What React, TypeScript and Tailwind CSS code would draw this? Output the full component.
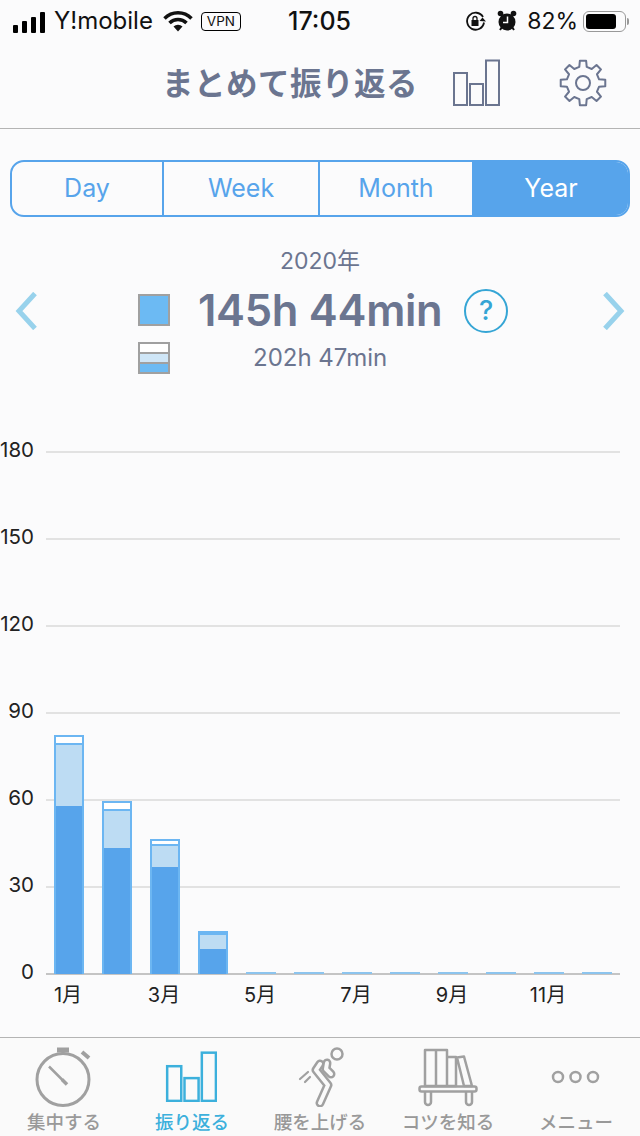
import React from "react";

const font = { fontFamily: 'Inter, "Noto Sans CJK JP", sans-serif' };
const slate = "#6b7590";
const bg = "#fbfbfc";

function Bars({ color, w = 2, width = 48, height = 47 }: { color: string; w?: number; width?: number; height?: number }) {
  return (
    <svg width={width} height={height} viewBox="0 0 48 47" fill="none" stroke={color} strokeWidth={w}>
      <rect x="2" y="14" width="13" height="32" />
      <rect x="18" y="25" width="13" height="21" />
      <rect x="34" y="1.500" width="13" height="44.500" />
    </svg>
  );
}

function gearPath() {
  const cx = 24;
  const cy = 24;
  const R = 22.5;
  const r = 16.5;
  const pts: string[] = [];
  for (let i = 0; i < 8; i++) {
    const a = (i * 45 * Math.PI) / 180 - Math.PI / 2;
    const d1 = (13 * Math.PI) / 180;
    const d2 = (8 * Math.PI) / 180;
    const p = (rad: number, ang: number) => `${(cx + rad * Math.cos(ang)).toFixed(2)} ${(cy + rad * Math.sin(ang)).toFixed(2)}`;
    pts.push(p(r, a - d1), p(R, a - d2), p(R, a + d2), p(r, a + d1));
  }
  return "M" + pts.join("L") + "Z";
}

function Gear() {
  return (
    <svg width="48" height="48" viewBox="0 0 48 48" fill="none" stroke={slate} strokeWidth="2" strokeLinejoin="round">
      <path d={gearPath()} />
      <circle cx="24" cy="24" r="7" />
    </svg>
  );
}

function Stopwatch() {
  return (
    <svg width="60" height="64" viewBox="0 0 60 64" fill="none" stroke="#a0a0a0" strokeWidth="3">
      <circle cx="29" cy="36.500" r="26" />
      <path d="M23 7h12" strokeWidth="5" />
      <path d="M29 8v3" />
      <path d="M48 9l7 6" strokeWidth="4" />
      <path d="M15 23.500l14 14" strokeWidth="2.500" />
      <path d="M28 36.500l5 5" strokeWidth="3.500" />
    </svg>
  );
}

function Runner() {
  const limbs = "M38 23 L34 29 L46 44 L38 62";
  const arm = "M45 22 L44 28 L49 33";
  return (
    <svg className="mt-[3px]" width="48" height="62" viewBox="14 4 48 62" fill="none" strokeLinejoin="round" strokeLinecap="round">
      <circle cx="55" cy="13" r="5.500" stroke="#a0a0a0" strokeWidth="2.500" />
      <path d={limbs} stroke="#a0a0a0" strokeWidth="9" />
      <path d={arm} stroke="#a0a0a0" strokeWidth="9" />
      <path d={limbs} stroke="#fafafa" strokeWidth="4" />
      <path d={arm} stroke="#fafafa" strokeWidth="4" />
      <path d="M18 38l8-7M23 41l5-5" stroke="#a0a0a0" strokeWidth="2.200" />
    </svg>
  );
}

function Books() {
  return (
    <svg width="60" height="64" viewBox="0 0 60 64" fill="none" stroke="#a0a0a0" strokeWidth="2.500" strokeLinejoin="round">
      <path d="M7 7h11v36H7zM18 7h11v36H18zM29 14h9v29h-9zM39 14.500l7-1 8 29.500h-8z" />
      <rect x="1.500" y="43.500" width="57" height="5" rx="2" />
      <path d="M7 49v10a3 3 0 0 0 6 0V49M48 49v10a3 3 0 0 0 6 0V49" />
    </svg>
  );
}

function Dots() {
  return (
    <svg className="mt-[4px]" width="50" height="16" viewBox="0 0 50 16" fill="none" stroke="#a0a0a0" strokeWidth="2.500">
      <circle cx="7" cy="8" r="5" />
      <circle cx="24.500" cy="8" r="5" />
      <circle cx="42" cy="8" r="5" />
    </svg>
  );
}

function StatusBar() {
  return (
    <div className="h-[44px] flex items-center pb-[2px] text-[#111]">
      <div className="flex-1 basis-0 flex items-center pl-[13px]">
        <div className="flex items-end gap-[4px] mt-[2px]">
          {[8, 12, 16, 21].map((h) => (
            <div key={h} className="w-[5px] bg-black rounded-[1px]" style={{ height: h }} />
          ))}
        </div>
        <span className="ml-[9px] text-[24px] leading-none">Y!mobile</span>
        <svg className="ml-[10px]" width="30" height="22" viewBox="0 0 30 22" fill="none" stroke="#111" strokeWidth="3.500">
          <path d="M1.500 8.500A19 19 0 0 1 28.500 8.500" />
          <path d="M6.500 13A12 12 0 0 1 23.500 13" />
          <path d="M15 21.500L10.500 16.500A6.500 6.500 0 0 1 19.500 16.500Z" fill="#111" stroke="none" />
        </svg>
        <span className="ml-[8px] h-[19px] w-[40px] border-[1.5px] border-black rounded-[4px] text-[13.5px] leading-[16px] text-center">VPN</span>
      </div>
      <span className="mr-[3px] text-[25px] font-medium leading-none">17:05</span>
      <div className="flex-1 basis-0 flex items-center justify-end pr-[11px]">
        <svg width="21" height="22" viewBox="0 0 21 22" fill="none" stroke="#111" strokeWidth="1.800">
          <path d="M18 7a8.500 8.500 0 1 0 1 5.500" />
          <path d="M21 11.500l-3.500-4-3 3.500z" fill="#111" stroke="none" />
          <rect x="6.500" y="10" width="7" height="6" fill="#111" stroke="none" />
          <path d="M8 10V8.500a2 2 0 0 1 4 0V10" strokeWidth="1.300" />
        </svg>
        <svg className="ml-[11px]" width="20" height="22" viewBox="0 0 20 22" fill="#111">
          <circle cx="10" cy="12" r="8.500" />
          <circle cx="3.500" cy="3.500" r="2.800" />
          <circle cx="16.500" cy="3.500" r="2.800" />
          <path d="M3 20l2-3M17 20l-2-3" stroke="#111" strokeWidth="2" />
          <path d="M10.500 6.500v6H6" stroke="#fff" strokeWidth="1.500" fill="none" />
        </svg>
        <span className="ml-[10px] text-[23px] leading-none">82%</span>
        <div className="ml-[5px] w-[43px] h-[21px] border-[1.5px] border-[#999] rounded-[6px] p-[2px]">
          <div className="w-[30px] h-full bg-black rounded-[3px]" />
        </div>
        <div className="w-[2px] h-[7px] bg-[#999] rounded-r-[2px] ml-[1px]" />
      </div>
    </div>
  );
}

function Header() {
  return (
    <div className="h-[85px] border-b border-[#b4b4b4] flex items-center">
      <h1 className="ml-[162px] w-[253px] mb-[4px] text-[31.5px] leading-none font-semibold tracking-[0.5px] whitespace-nowrap" style={{ color: slate }}>
        まとめて振り返る
      </h1>
      <div className="ml-[37px] mt-[-7px]">
        <Bars color={slate} />
      </div>
      <div className="ml-[59px] mt-[-6px]">
        <Gear />
      </div>
    </div>
  );
}

function Segments() {
  const items = ["Day", "Week", "Month"];
  return (
    <div className="mt-[31px] mx-[10px] h-[57px] flex rounded-[14px] border-2 border-[#57a4eb] overflow-hidden text-[25px] text-[#57a4eb]">
      {items.map((t, i) => (
        <div
          key={t}
          className={`flex items-center justify-center border-r-2 border-[#57a4eb] ${i === 0 ? "w-[152px]" : i === 1 ? "w-[156px]" : "w-[154px]"}`}
        >
          {t}
        </div>
      ))}
      <div className="flex-1 bg-[#57a4eb] text-white flex items-center justify-center">Year</div>
    </div>
  );
}

function Summary() {
  return (
    <div className="h-[160px] mt-[28px] text-center" style={{ color: slate }}>
      <div className="text-[23px] leading-[32px]">2020年</div>
      <div className="flex items-center h-[62px] mt-[3px]">
        <svg className="ml-[15px]" width="22" height="38" viewBox="0 0 22 38" fill="none" stroke="#98d2ec" strokeWidth="5">
          <path d="M20 1.500L4 19l16 17.500" />
        </svg>
        <div className="ml-[101px] mb-[2px] w-[32px] h-[32px] bg-[#6cbaf3] border-2 border-[#a0a0a0]" />
        <div className="ml-[28px] w-[243px] mb-[1px] text-left whitespace-nowrap text-[43.5px] font-semibold leading-none tracking-[-0.3px]">145h 44min</div>
        <div className="ml-[23px] w-[44px] h-[44px] rounded-full border-2 border-[#35a5d5] text-[#35a5d5] text-[27px] leading-[40px] font-medium">?</div>
        <svg className="ml-[95px]" width="22" height="38" viewBox="0 0 22 38" fill="none" stroke="#98d2ec" strokeWidth="5">
          <path d="M2 1.500L18 19 2 36.500" />
        </svg>
      </div>
      <div className="flex items-center">
        <div className="ml-[138px] w-[32px] h-[32px] border-2 border-[#a0a0a0] flex flex-col bg-white">
          <div className="h-[10px] bg-white border-b-2 border-[#a0a0a0]" />
          <div className="flex-1 bg-[#cfe6f7]" />
          <div className="h-[10px] bg-[#6cbaf3] border-t-2 border-[#a0a0a0]" />
        </div>
        <div className="ml-[83px] text-[24px] leading-none">202h 47min</div>
      </div>
    </div>
  );
}

const ticks = ["180", "150", "120", "90", "60", "30"];
const tops = [
  { cap: 10, pale: 61, solid: 168 },
  { cap: 10, pale: 37, solid: 126 },
  { cap: 7, pale: 21, solid: 107 },
  { cap: 4, pale: 14, solid: 25 },
];

function Chart() {
  return (
    <div className="relative flex-1 min-h-0 text-[20.5px] text-[#222]">
      <div className="pt-[46px]">
        {ticks.map((t) => (
          <div key={t} className="h-[87px]">
            <div className="flex items-start h-[2px]">
              <span className="w-[34px] text-right leading-[24px] mt-[-13px] shrink-0">{t}</span>
              <div className="ml-[12px] w-[574px] h-[2px] bg-[#e2e2e2]" />
            </div>
          </div>
        ))}
        <div className="flex items-start h-[2px]">
          <span className="w-[34px] text-right leading-[24px] mt-[-13px] shrink-0">0</span>
          <div className="ml-[12px] w-[574px] h-[2px] bg-[#c4c4c4]" />
        </div>
      </div>
      <div className="absolute left-[54px] top-[330px] h-[239px] flex items-end gap-[18px]">
        {Array.from({ length: 12 }, (_, i) => {
          const b = tops[i];
          if (!b) return <div key={i} className="w-[30px] h-[2px] bg-[#8cc4ee]" />;
          return (
            <div key={i} className="w-[30px] flex flex-col">
              <div className="border-2 border-[#6cb6f2] bg-white" style={{ height: b.cap }} />
              <div className="border-x-2 border-[#6cb6f2] bg-[#bddcf3]" style={{ height: b.pale }} />
              <div className="bg-[#57a4eb] border-x-2 border-[#6cb6f2]" style={{ height: b.solid }} />
            </div>
          );
        })}
      </div>
      <div className="mt-[8px] ml-[20px] flex text-[20px] leading-[24px]">
        {["1月", "3月", "5月", "7月", "9月", "11月"].map((m) => (
          <div key={m} className="w-[96px] text-center">{m}</div>
        ))}
      </div>
    </div>
  );
}

function TabBar() {
  const tabs = [
    { icon: <Stopwatch />, label: "集中する", active: false },
    {
      icon: (
        <div className="mt-[4px] mr-[2px]">
          <Bars color="#3cb0dc" w={2.300} width={52} height={51} />
        </div>
      ),
      label: "振り返る",
      active: true,
    },
    { icon: <Runner />, label: "腰を上げる", active: false },
    { icon: <Books />, label: "コツを知る", active: false },
    { icon: <Dots />, label: "メニュー", active: false },
  ];
  return (
    <div className="h-[99px] shrink-0 border-t border-[#b4b4b4] bg-[#fafafa] flex">
      {tabs.map((t) => (
        <div key={t.label} className="w-[128px] flex flex-col items-center">
          <div className="h-[71px] flex items-center justify-center mt-[1px]">{t.icon}</div>
          <div className={`text-[18.5px] leading-[24px] font-medium whitespace-nowrap ${t.active ? "text-[#3cb0dc]" : "text-[#999]"}`}>
            {t.label}
          </div>
        </div>
      ))}
    </div>
  );
}

export default function App() {
  return (
    <div className="flex flex-col w-[640px] h-[1136px] overflow-hidden" style={{ ...font, backgroundColor: bg }}>
      <StatusBar />
      <Header />
      <Segments />
      <Summary />
      <Chart />
      <TabBar />
    </div>
  );
}
